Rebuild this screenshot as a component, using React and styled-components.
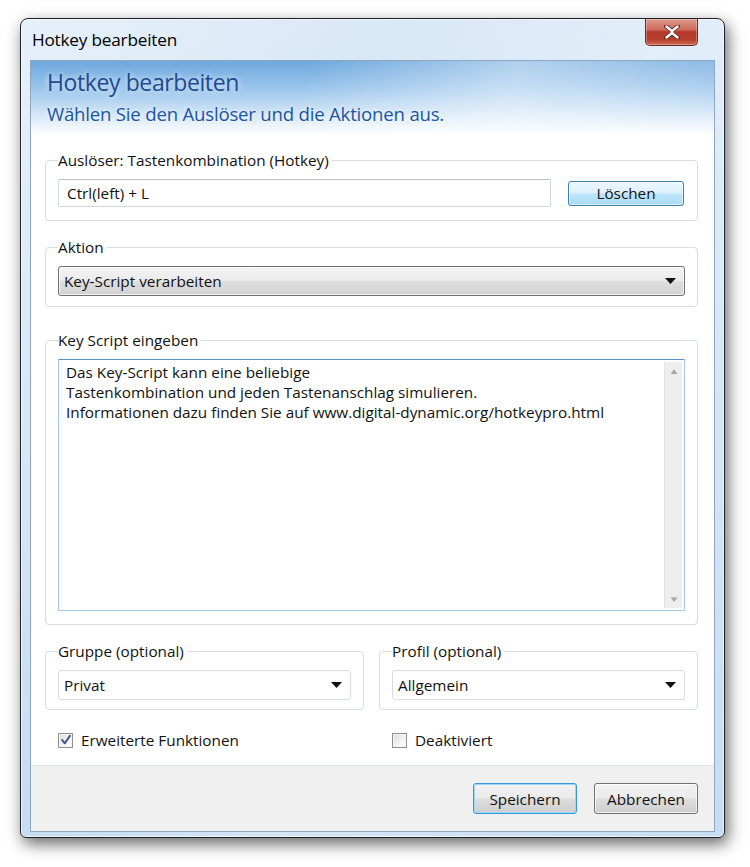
import styled, { createGlobalStyle } from "styled-components";

const GlobalStyle = createGlobalStyle`
  html, body {
    margin: 0;
    padding: 0;
    background: #ffffff;
  }
  body {
    font-family: "Open Sans", "Noto Sans", sans-serif;
    font-size: 15.3px;
    color: #111;
  }
  * {
    box-sizing: border-box;
  }
`;

function ArrowDown() {
  return (
    <svg width="11" height="6" viewBox="0 0 11 6">
      <path d="M0 0 H11 L5.5 6 Z" fill="#111" />
    </svg>
  );
}

function CheckMark() {
  return (
    <svg width="12" height="12" viewBox="0 0 12 12">
      <path
        d="M2.2 6 L4.8 9.3 L10 1.8"
        fill="none"
        stroke="#3d4f8c"
        strokeWidth="2"
        strokeLinecap="round"
        strokeLinejoin="round"
      />
    </svg>
  );
}

function CloseGlyph() {
  return (
    <svg width="16" height="14" viewBox="0 0 16 14">
      <path
        d="M2 1 L8 6 L14 1 M2 13 L8 8 L14 13"
        fill="none"
        stroke="#5a2a22"
        strokeWidth="4.2"
        strokeLinecap="round"
      />
      <path
        d="M2.5 1.5 L8 6.2 L13.5 1.5 M2.5 12.5 L8 7.8 L13.5 12.5"
        fill="none"
        stroke="#ffffff"
        strokeWidth="2.4"
        strokeLinecap="round"
      />
    </svg>
  );
}

export default function App() {
  return (
    <>
      <GlobalStyle />
      <Page>
        <Window>
          <TitleBar>
            <TitleText>Hotkey bearbeiten</TitleText>
            <CloseButton>
              <CloseGlyph />
            </CloseButton>
          </TitleBar>
          <Client>
            <Banner>
              <Heading>Hotkey bearbeiten</Heading>
              <SubHeading>Wählen Sie den Auslöser und die Aktionen aus.</SubHeading>
            </Banner>
            <Body>
              <Group $mt={15} $pb={13}>
                <Legend>Auslöser: Tastenkombination (Hotkey)</Legend>
                <Row>
                  <TextInput>Ctrl(left) + L</TextInput>
                  <ClearButton>Löschen</ClearButton>
                </Row>
              </Group>

              <Group $mt={16} $pb={10}>
                <Legend>Aktion</Legend>
                <Combo $raised>
                  <span>Key-Script verarbeiten</span>
                  <ArrowDown />
                </Combo>
              </Group>

              <Group $mt={23} $pb={13}>
                <Legend>Key Script eingeben</Legend>
                <ScriptBox>
                  <ScriptText>
                    Das Key-Script kann eine beliebige
                    <br />
                    Tastenkombination und jeden Tastenanschlag simulieren.
                    <br />
                    Informationen dazu finden Sie auf www.digital-dynamic.org/hotkeypro.html
                  </ScriptText>
                  <ScrollTrack>
                    <ScrollArrow>▲</ScrollArrow>
                    <ScrollArrow>▼</ScrollArrow>
                  </ScrollTrack>
                </ScriptBox>
              </Group>

              <Columns $mt={16}>
                <Group>
                  <Legend>Gruppe (optional)</Legend>
                  <Combo>
                    <span>Privat</span>
                    <ArrowDown />
                  </Combo>
                </Group>
                <Group>
                  <Legend>Profil (optional)</Legend>
                  <Combo>
                    <span>Allgemein</span>
                    <ArrowDown />
                  </Combo>
                </Group>
              </Columns>

              <Columns $mt={20}>
                <CheckRow>
                  <CheckBox>
                    <CheckMark />
                  </CheckBox>
                  Erweiterte Funktionen
                </CheckRow>
                <CheckRow>
                  <CheckBox />
                  Deaktiviert
                </CheckRow>
              </Columns>
            </Body>
            <Footer>
              <DialogButton $default>Speichern</DialogButton>
              <DialogButton>Abbrechen</DialogButton>
            </Footer>
          </Client>
        </Window>
      </Page>
    </>
  );
}

const Page = styled.div`
  padding: 18px 0 0 20px;
  width: 750px;
  height: 867px;
`;

const Window = styled.div`
  width: 705px;
  height: 820px;
  display: flex;
  flex-direction: column;
  padding: 0 9px 5px 9px;
  border: 1px solid #1e2126;
  border-radius: 8px 8px 6px 6px;
  background: linear-gradient(
      115deg,
      rgba(255, 255, 255, 0.35) 0%,
      rgba(255, 255, 255, 0) 35%,
      rgba(255, 255, 255, 0.25) 60%,
      rgba(255, 255, 255, 0) 100%
    ),
    linear-gradient(180deg, #d9e8f7 0%, #cde1f4 60%, #c6dcf2 100%);
  box-shadow: 3px 6px 16px rgba(0, 0, 0, 0.6), inset 0 0 0 1px rgba(255, 255, 255, 0.6);
`;

const TitleBar = styled.div`
  height: 41px;
  display: flex;
  justify-content: space-between;
  align-items: flex-start;
`;

const TitleText = styled.div`
  padding: 10px 0 0 2px;
  font-size: 17.2px;
  line-height: 22px;
  letter-spacing: -0.2px;
  color: #000;
`;

const CloseButton = styled.div`
  width: 53px;
  height: 27px;
  margin-right: 17px;
  display: flex;
  align-items: center;
  justify-content: center;
  border: 1px solid #6e2a1f;
  border-top: none;
  border-radius: 0 0 5px 5px;
  background: linear-gradient(
    180deg,
    #dd9a8c 0%,
    #cf6d5b 40%,
    #b3382a 50%,
    #b8402e 80%,
    #cd6a52 100%
  );
  box-shadow: inset 0 0 0 1px rgba(255, 255, 255, 0.3);
`;

const Client = styled.div`
  flex: 1;
  display: flex;
  flex-direction: column;
  border: 1px solid #8ea6c0;
  background: #ffffff;
`;

const Banner = styled.div`
  height: 74px;
  padding: 6px 0 0 16px;
  background: linear-gradient(
      100deg,
      rgba(255, 255, 255, 0) 0%,
      rgba(255, 255, 255, 0) 40%,
      rgba(255, 255, 255, 0.45) 70%,
      rgba(255, 255, 255, 0.2) 100%
    ),
    linear-gradient(180deg, #6ea8de 0%, #98c3eb 35%, #d3e6f7 72%, #ffffff 100%);
`;

const Heading = styled.div`
  font-size: 23px;
  line-height: 30px;
  color: #1f4a8e;
  letter-spacing: -0.4px;
  text-shadow: 0 0 6px rgba(255, 255, 255, 0.9);
`;

const SubHeading = styled.div`
  margin-top: 5px;
  font-size: 18.6px;
  line-height: 24px;
  letter-spacing: -0.2px;
  color: #1b55a3;
  text-shadow: 0 0 5px rgba(255, 255, 255, 0.8);
`;

const Body = styled.div`
  flex: 1;
  display: flex;
  flex-direction: column;
  padding: 0 16px 0 14px;
`;

const Group = styled.fieldset`
  margin: ${(p) => p.$mt || 0}px 0 0 0;
  padding: 9px 12px ${(p) => p.$pb || 9}px 12px;
  border: 1px solid #d5dde4;
  border-radius: 4px;
  min-width: 0;
`;

const Legend = styled.legend`
  padding: 0 3px 0 0;
  font-size: 15.3px;
  line-height: 20px;
  color: #111;
`;

const Row = styled.div`
  display: flex;
  align-items: center;
  gap: 17px;
`;

const TextInput = styled.div`
  flex: 1;
  height: 28px;
  display: flex;
  align-items: center;
  padding: 0 8px;
  border: 1px solid #d3d8dd;
  border-top-color: #b9c0c7;
  border-radius: 2px;
  background: #fff;
`;

const ClearButton = styled.div`
  width: 116px;
  height: 25px;
  margin-right: 1px;
  display: flex;
  align-items: center;
  justify-content: center;
  border: 1px solid #3c7fb1;
  border-radius: 3px;
  background: linear-gradient(180deg, #ecf7fd 0%, #dbf0fb 48%, #bee6fa 52%, #a9dbf6 100%);
  box-shadow: inset 0 0 0 1px rgba(255, 255, 255, 0.6);
  color: #111;
`;

const Combo = styled.div`
  height: 30px;
  display: flex;
  align-items: center;
  justify-content: space-between;
  padding: 0 8px 0 5px;
  border: 1px solid ${(p) => (p.$raised ? "#707070" : "#d9dde1")};
  border-radius: 3px;
  background: ${(p) =>
    p.$raised
      ? "linear-gradient(180deg, #f3f3f3 0%, #ebebeb 48%, #dedede 52%, #d2d2d2 100%)"
      : "#ffffff"};
  color: #111;
  box-shadow: ${(p) => (p.$raised ? "inset 0 0 0 1px rgba(255,255,255,0.7)" : "none")};
`;

const ScriptBox = styled.div`
  height: 252px;
  display: flex;
  border: 1px solid #a9c6e4;
  border-top-color: #5f93c5;
  border-radius: 1px;
  background: #fff;
`;

const ScriptText = styled.div`
  flex: 1;
  padding: 2px 7px;
  line-height: 20px;
  color: #111;
`;

const ScrollTrack = styled.div`
  width: 18px;
  margin: 2px 2px 2px 0;
  display: flex;
  flex-direction: column;
  justify-content: space-between;
  align-items: center;
  background: #eeeeee;
  border-left: 1px solid #e2e2e2;
`;

const ScrollArrow = styled.div`
  font-size: 8px;
  line-height: 18px;
  color: #a6a6a6;
  transform: scaleX(1.4);
`;

const Columns = styled.div`
  margin-top: ${(p) => p.$mt || 0}px;
  display: grid;
  grid-template-columns: 1fr 1fr;
  gap: 15px;
`;

const CheckRow = styled.div`
  display: flex;
  align-items: center;
  gap: 8px;
  padding-left: 13px;
  line-height: 20px;
  color: #111;
`;

const CheckBox = styled.div`
  width: 15px;
  height: 15px;
  display: flex;
  align-items: center;
  justify-content: center;
  border: 1px solid #8f8f8f;
  background: linear-gradient(135deg, #dcdcdc 0%, #f4f4f4 60%, #ffffff 100%);
  box-shadow: inset 0 0 0 1px #f4f4f4;
`;

const Footer = styled.div`
  height: 66px;
  display: flex;
  justify-content: flex-end;
  align-items: center;
  gap: 17px;
  padding-right: 16px;
  border-top: 1px solid #dfe4ea;
  background: #f0f0f0;
`;

const DialogButton = styled.div`
  width: 104px;
  height: 31px;
  display: flex;
  align-items: center;
  justify-content: center;
  border: 1px solid ${(p) => (p.$default ? "#3399dd" : "#707070")};
  border-radius: 3px;
  background: linear-gradient(180deg, #f2f2f2 0%, #ebebeb 48%, #dddddd 52%, #cfcfcf 100%);
  box-shadow: inset 0 0 0 1px
    ${(p) => (p.$default ? "#9fd8f6" : "rgba(255,255,255,0.7)")};
  color: #111;
`;
